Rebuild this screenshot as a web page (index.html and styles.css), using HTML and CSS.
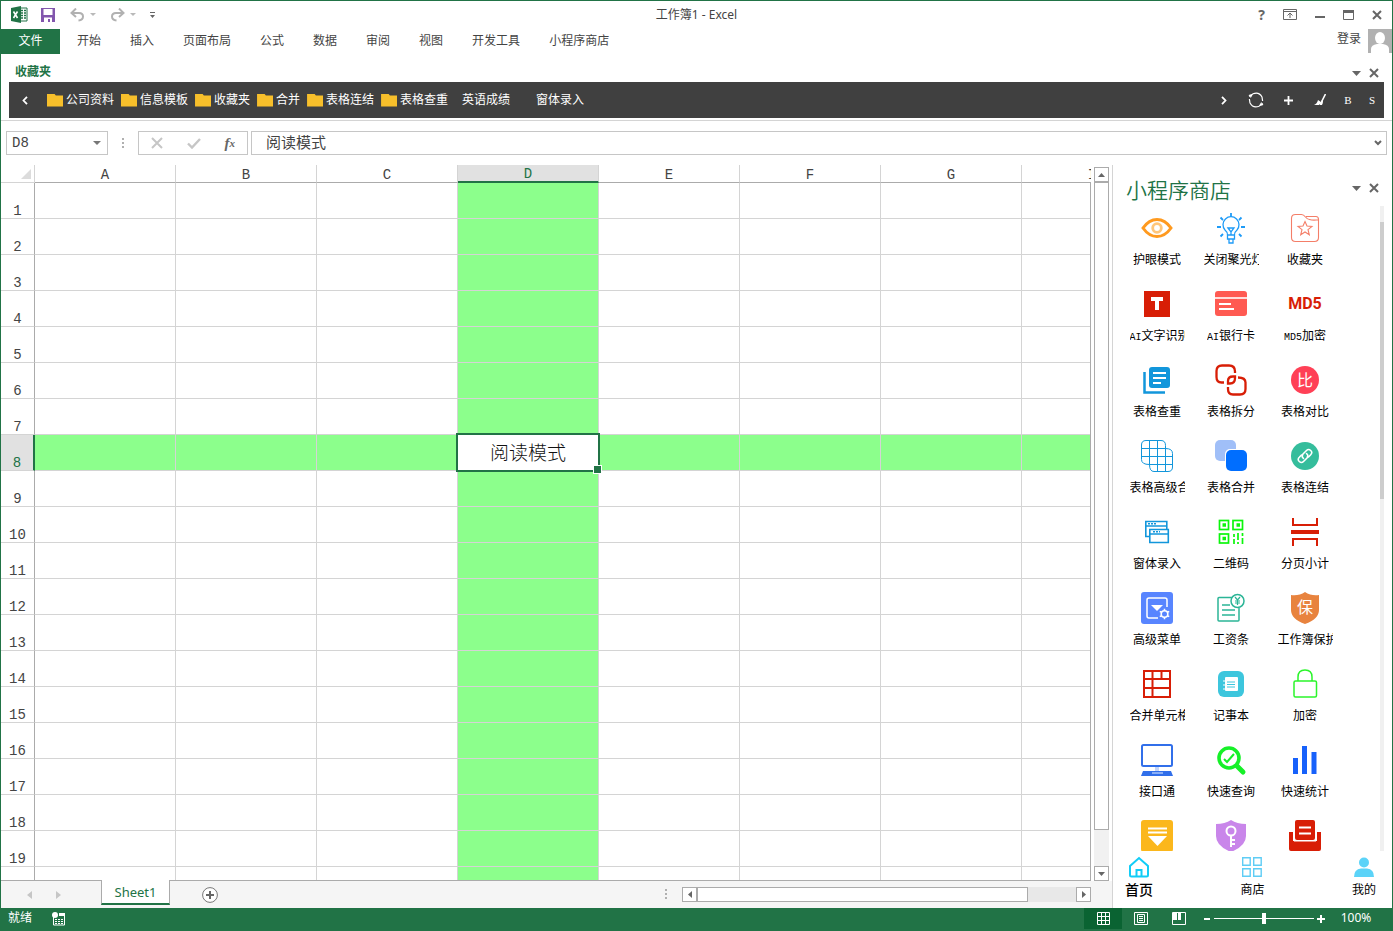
FILE: index.html
```html
<!DOCTYPE html>
<html lang="zh-CN">
<head>
<meta charset="utf-8">
<title>工作簿1 - Excel</title>
<link rel="stylesheet" href="styles.css">
</head>
<body>
<div class="window">
  <header class="titlebar">
    <div class="quick">
      <svg class="logo" width="18" height="18" viewBox="0 0 18 18"><path d="M9 2h7v13H9z" fill="#fff" stroke="#217346"/><path d="M10 4.500h2m1 0h2M10 7h2m1 0h2M10 9.500h2m1 0h2M10 12h2m1 0h2" stroke="#217346" stroke-width="1.500"/><path d="M0 2l10-2v17L0 15z" fill="#217346"/><path d="M2.500 5.500l4 6.500M6.500 5.500l-4 6.500" stroke="#fff" stroke-width="1.600"/></svg>
      <button class="save" aria-label="保存"><svg width="14" height="14" viewBox="0 0 14 14"><path d="M0 0h14v14H0z" fill="#8256ad"/><path d="M2.500 1h9v6h-9zM3 9.500h8V14H9v-3H7v3H3z" fill="#fff"/></svg></button>
      <button class="undo" aria-label="撤消"><svg width="27" height="14" viewBox="0 0 27 14" fill="none"><path d="M2 5h7q4 0 4 3.500T8.500 12.500M6 .5L1.500 5 6 9" stroke="#b1b1b1" stroke-width="2"/><path d="M20 5h6l-3 3z" fill="#b9b9b9"/></svg></button>
      <button class="redo" aria-label="恢复"><svg width="27" height="14" viewBox="0 0 27 14" fill="none"><path d="M13 5H6Q2 5 2 8.500t4.500 4M9 .5L13.500 5 9 9" stroke="#b1b1b1" stroke-width="2"/><path d="M20 5h6l-3 3z" fill="#b9b9b9"/></svg></button>
      <button class="more" aria-label="自定义"><svg width="7" height="7" viewBox="0 0 7 7"><path d="M1 0h5v1H1zM1 3h5L3.500 6z" fill="#666"/></svg></button>
    </div>
    <h1 class="doc-title">工作簿1 - Excel</h1>
    <div class="win-buttons">
      <button class="help" aria-label="帮助">?</button>
      <button aria-label="功能区选项"><svg width="14" height="12" viewBox="0 0 14 12" fill="none" stroke="#666"><path d="M.5.5h13v10H.5zM1 2.500h12M7 9V4M4.500 6.500L7 4l2.500 2.500"/></svg></button>
      <button aria-label="最小化"><svg width="10" height="12" viewBox="0 0 10 12"><path d="M0 7h10v2H0z" fill="#666"/></svg></button>
      <button aria-label="最大化"><svg width="11" height="11" viewBox="0 0 11 11"><path d="M.5.5h10v9H.5z" fill="none" stroke="#666"/><path d="M0 0h11v3H0z" fill="#666"/></svg></button>
      <button aria-label="关闭"><svg width="10" height="10" viewBox="0 0 10 10"><path d="M1 1l8 8M9 1L1 9" stroke="#666" stroke-width="2"/></svg></button>
    </div>
  </header>

  <nav class="ribbon">
    <button class="tab file">文件</button><button class="tab">开始</button><button class="tab">插入</button><button class="tab">页面布局</button><button class="tab">公式</button><button class="tab">数据</button><button class="tab">审阅</button><button class="tab">视图</button><button class="tab">开发工具</button><button class="tab">小程序商店</button>
    <button class="login"><span>登录</span><svg width="24" height="24" viewBox="0 0 24 24"><path d="M0 0h24v24H0z" fill="#b1b1b1"/><ellipse cx="12" cy="9" rx="5" ry="6" fill="#fff"/><path d="M3 24v-4q0-4 6-5h6q6 1 6 5v4z" fill="#fff"/></svg></button>
  </nav>

  <section class="favorites">
    <div class="fav-head">
      <h2>收藏夹</h2>
      <div class="pane-tools">
        <button aria-label="选项"><svg width="9" height="5" viewBox="0 0 9 5"><path d="M0 0h9L4.500 5z" fill="#666"/></svg></button>
        <button aria-label="关闭"><svg width="10" height="10" viewBox="0 0 10 10"><path d="M1 1l8 8M9 1L1 9" stroke="#666" stroke-width="2"/></svg></button>
      </div>
    </div>
    <div class="fav-bar">
      <button class="back" aria-label="后退"><svg width="6" height="9" viewBox="0 0 6 9"><path d="M5 .8L1.500 4.500 5 8.200" fill="none" stroke="#fff" stroke-width="1.800"/></svg></button>
      <div class="folders">
        <a href="#"><i class="folder"></i>公司资料</a>
        <a href="#"><i class="folder"></i>信息模板</a>
        <a href="#"><i class="folder"></i>收藏夹</a>
        <a href="#"><i class="folder"></i>合并</a>
        <a href="#"><i class="folder"></i>表格连结</a>
        <a href="#"><i class="folder"></i>表格查重</a>
        <a href="#" class="plain">英语成绩</a>
        <a href="#" class="plain">窗体录入</a>
      </div>
      <div class="fav-actions">
        <button aria-label="前进"><svg width="6" height="9" viewBox="0 0 6 9"><path d="M1 .8l3.500 3.700L1 8.200" fill="none" stroke="#fff" stroke-width="1.800"/></svg></button>
        <button aria-label="刷新"><svg width="16" height="16" viewBox="0 0 16 16" fill="none" stroke="#fff" stroke-width="1.200"><path d="M5 1.800Q11-.5 14 5l.6 4M11 14.200Q5 16.500 2 11L1.400 7M2.500 5.500Q3 3 5 1.800M13.500 10.500Q13 13 11 14.200"/><path d="M1 4l3-1M12 13l3-1" stroke-width="2"/></svg></button>
        <button aria-label="添加"><svg width="9" height="9" viewBox="0 0 9 9"><path d="M4.500 0v9M0 4.500h9" stroke="#fff" stroke-width="1.800"/></svg></button>
        <button aria-label="清理"><svg width="12" height="12" viewBox="0 0 12 12"><path d="M11.500 0L8 7l-.5 3" fill="none" stroke="#fff" stroke-width="1.600"/><path d="M4 6l3 2 1-2 1 1-1 4H6v-1l-1 1H0q3-1 4-5z" fill="#fff"/></svg></button>
        <button class="letter">B</button>
        <button class="letter">S</button>
      </div>
    </div>
  </section>

  <section class="formula-bar">
    <div class="name-box"><input aria-label="名称框" value="D8"><svg width="8" height="4" viewBox="0 0 8 4"><path d="M0 0h8L4 4z" fill="#777"/></svg></div>
    <svg class="dots" width="3" height="11" viewBox="0 0 3 11"><path d="M0 0h2v2H0zM0 4h2v2H0zM0 8h2v2H0z" fill="#b0b0b0"/></svg>
    <div class="fx">
      <button aria-label="取消"><svg width="12" height="12" viewBox="0 0 12 12"><path d="M1 1l10 10M11 1L1 11" stroke="#c6c6c6" stroke-width="2"/></svg></button>
      <button aria-label="输入"><svg width="14" height="11" viewBox="0 0 14 11"><path d="M1 5.500l4 4L13 1" fill="none" stroke="#c6c6c6" stroke-width="2.400"/></svg></button>
      <button class="fn" aria-label="插入函数">f<sub>x</sub></button>
    </div>
    <div class="formula"><input aria-label="编辑栏" value="阅读模式"><svg width="8" height="6" viewBox="0 0 8 6"><path d="M1 1l3 3 3-3" fill="none" stroke="#666" stroke-width="2"/></svg></div>
  </section>

  <main class="work">
    <section class="book">
      <div class="sheet-area">
        <div class="sheet">
          <table>
            <colgroup><col class="num"><col><col><col><col><col><col><col><col></colgroup>
            <thead><tr><th class="corner"><svg width="10" height="10" viewBox="0 0 10 10"><path d="M10 0v10H0z" fill="#dcdcdc"/></svg></th><th>A</th><th>B</th><th>C</th><th class="on">D</th><th>E</th><th>F</th><th>G</th><th>I</th></tr></thead>
            <tbody>
              <tr><th>1</th><td></td><td></td><td></td><td class="hl"></td><td></td><td></td><td></td><td></td></tr>
              <tr><th>2</th><td></td><td></td><td></td><td class="hl"></td><td></td><td></td><td></td><td></td></tr>
              <tr><th>3</th><td></td><td></td><td></td><td class="hl"></td><td></td><td></td><td></td><td></td></tr>
              <tr><th>4</th><td></td><td></td><td></td><td class="hl"></td><td></td><td></td><td></td><td></td></tr>
              <tr><th>5</th><td></td><td></td><td></td><td class="hl"></td><td></td><td></td><td></td><td></td></tr>
              <tr><th>6</th><td></td><td></td><td></td><td class="hl"></td><td></td><td></td><td></td><td></td></tr>
              <tr><th>7</th><td></td><td></td><td></td><td class="hl"></td><td></td><td></td><td></td><td></td></tr>
              <tr class="current"><th>8</th><td></td><td></td><td></td><td class="active">阅读模式</td><td></td><td></td><td></td><td></td></tr>
              <tr><th>9</th><td></td><td></td><td></td><td class="hl"></td><td></td><td></td><td></td><td></td></tr>
              <tr><th>10</th><td></td><td></td><td></td><td class="hl"></td><td></td><td></td><td></td><td></td></tr>
              <tr><th>11</th><td></td><td></td><td></td><td class="hl"></td><td></td><td></td><td></td><td></td></tr>
              <tr><th>12</th><td></td><td></td><td></td><td class="hl"></td><td></td><td></td><td></td><td></td></tr>
              <tr><th>13</th><td></td><td></td><td></td><td class="hl"></td><td></td><td></td><td></td><td></td></tr>
              <tr><th>14</th><td></td><td></td><td></td><td class="hl"></td><td></td><td></td><td></td><td></td></tr>
              <tr><th>15</th><td></td><td></td><td></td><td class="hl"></td><td></td><td></td><td></td><td></td></tr>
              <tr><th>16</th><td></td><td></td><td></td><td class="hl"></td><td></td><td></td><td></td><td></td></tr>
              <tr><th>17</th><td></td><td></td><td></td><td class="hl"></td><td></td><td></td><td></td><td></td></tr>
              <tr><th>18</th><td></td><td></td><td></td><td class="hl"></td><td></td><td></td><td></td><td></td></tr>
              <tr><th>19</th><td></td><td></td><td></td><td class="hl"></td><td></td><td></td><td></td><td></td></tr>
              <tr><th></th><td></td><td></td><td></td><td class="hl"></td><td></td><td></td><td></td><td></td></tr>
            </tbody>
          </table>
        </div>
        <div class="vscroll">
          <button aria-label="向上"><svg width="7" height="4" viewBox="0 0 7 4"><path d="M0 4h7L3.500 0z" fill="#666"/></svg></button>
          <div class="vthumb"></div><div class="vtrack"></div>
          <button aria-label="向下"><svg width="7" height="4" viewBox="0 0 7 4"><path d="M0 0h7L3.500 4z" fill="#666"/></svg></button>
        </div>
      </div>
      <div class="tabs">
        <div class="tab-nav">
          <button aria-label="上一张"><svg width="5" height="8" viewBox="0 0 5 8"><path d="M5 0v8L0 4z" fill="#c6c6c6"/></svg></button>
          <button aria-label="下一张"><svg width="5" height="8" viewBox="0 0 5 8"><path d="M0 0v8l5-4z" fill="#c6c6c6"/></svg></button>
        </div>
        <button class="sheet-tab">Sheet1</button>
        <div class="tab-rest">
          <button class="add" aria-label="新工作表"><svg width="16" height="16" viewBox="0 0 16 16"><circle cx="8" cy="8" r="7.400" fill="#fff" stroke="#777"/><path d="M8 4v8M4 8h8" stroke="#666" stroke-width="2"/></svg></button>
          <svg class="grip" width="3" height="11" viewBox="0 0 3 11"><path d="M0 0h2v2H0zM0 4h2v2H0zM0 8h2v2H0z" fill="#b0b0b0"/></svg>
          <div class="hscroll">
            <button aria-label="向左"><svg width="4" height="7" viewBox="0 0 4 7"><path d="M4 0v7L0 3.500z" fill="#666"/></svg></button>
            <div class="hthumb"></div><div class="htrack"></div>
            <button aria-label="向右"><svg width="4" height="7" viewBox="0 0 4 7"><path d="M0 0v7l4-3.500z" fill="#666"/></svg></button>
          </div>
        </div>
      </div>
    </section>

    <aside class="store">
      <div class="store-head">
        <h2>小程序商店</h2>
        <div class="pane-tools">
          <button aria-label="选项"><svg width="9" height="5" viewBox="0 0 9 5"><path d="M0 0h9L4.500 5z" fill="#666"/></svg></button>
          <button aria-label="关闭"><svg width="10" height="10" viewBox="0 0 10 10"><path d="M1 1l8 8M9 1L1 9" stroke="#666" stroke-width="2"/></svg></button>
        </div>
      </div>
      <div class="store-body">
        <div class="apps">
          <a class="app" href="#"><svg viewBox="0 0 32 32" fill="none"><path d="M2 16q6-8.500 14-8.500T30 16q-6 8.500-14 8.500T2 16z" stroke="#ff9a1f" stroke-width="3"/><circle cx="16" cy="16" r="4.300" stroke="#ffc67a" stroke-width="2.800"/></svg><span>护眼模式</span></a>
          <a class="app" href="#"><svg viewBox="0 0 32 32" fill="none" stroke="#1e9bf7" stroke-width="1.300"><path d="M12.500 23q0-3-2.500-5a8 8 0 1 1 12 0q-2.500 2-2.500 5zM12.500 23v4h7v-4M14 27v4h4v-4M13 16l3 4 3-4zM16 20v3"/><path d="M16 1v4M5.500 5.500L8 8M26.500 5.500L24 8M2 15h4M26 15h4M5.500 24.500L8 22M26.500 24.500L24 22" stroke-width="1.800"/></svg><span>关闭聚光灯</span></a>
          <a class="app" href="#"><svg viewBox="0 0 32 32" fill="none" stroke="#f47e68" stroke-width="1.100"><path d="M25.500 29.500h-19q-4 0-4-4V6.500q0-4 4-4h6q2 0 4 2.500t4 2.500q3 1 9 .3v17.700q0 4-4 4zM17 4.500h10q2.500 0 2.500 3M16 9.500l2 4.500 5 .4-4 3.300 1.300 5L16 20l-4.300 2.700 1.300-5-4-3.300 5-.4z"/></svg><span>收藏夹</span></a>

          <a class="app" href="#"><svg viewBox="0 0 32 32"><path d="M3 3h26v26H3z" fill="#d81e06"/><path d="M10 11h12M16 11v11" stroke="#fff" stroke-width="4"/></svg><span><small>AI</small>文字识别</span></a>
          <a class="app" href="#"><svg class="wide" viewBox="0 0 34 32"><rect x="1" y="3" width="32" height="25" rx="3" fill="#ff5a52"/><path d="M1 10h32" stroke="#fff" stroke-width="1.600"/><path d="M5 16h12M5 21h15" stroke="#fff" stroke-width="2"/></svg><span><small>AI</small>银行卡</span></a>
          <a class="app" href="#"><b class="md5">MD5</b><span><small>MD5</small>加密</span></a>

          <a class="app" href="#"><svg viewBox="0 0 32 32"><rect x="8" y="3" width="21" height="21" rx="3" fill="#1296db"/><path d="M3.500 8v20.500H24" fill="none" stroke="#1296db" stroke-width="2.500"/><path d="M12 9h13M12 14h13M12 19h8" stroke="#fff" stroke-width="2"/></svg><span>表格查重</span></a>
          <a class="app" href="#"><svg viewBox="0 0 32 32" fill="none" stroke="#d81e06" stroke-width="2.300"><path d="M9 18.500H6.500Q1.500 18.500 1.500 13V7Q1.500 1.500 7 1.500h7q6 0 6 6V9M23 13.500q7.500 0 7.500 5V25q0 5.500-5.500 5.500h-7q-5 0-5-5.500v-2"/><path d="M13 19.500V17q0-4.500 5-4.500h2V14q0 5.500-5 5.500z"/></svg><span>表格拆分</span></a>
          <a class="app" href="#"><svg viewBox="0 0 32 32"><circle cx="16" cy="16" r="14" fill="#ff4056"/><text x="16" y="22" text-anchor="middle" font-size="16" fill="#fff">比</text></svg><span>表格对比</span></a>

          <a class="app" href="#"><svg viewBox="0 0 32 32" fill="none" stroke="#1296db"><path d="M5 .5h15q4.500 0 4.500 5v3q7 0 7 5V27q0 4.500-4.500 4.500H13q-4.500 0-4.500-7-8 0-8-5V5Q.5.500 5 .5zM8.500 1v24M16.500 1v30M24.500 8v23M1 8.500h24M1 16.500h30M8 24.500h23"/></svg><span>表格高级合并</span></a>
          <a class="app" href="#"><svg viewBox="0 0 32 32"><rect width="21" height="21" rx="5" fill="#a0bff8"/><rect x="10" y="9" width="23" height="23" rx="5" fill="#fff"/><rect x="11" y="10" width="21" height="21" rx="5" fill="#006eff"/></svg><span>表格合并</span></a>
          <a class="app" href="#"><svg viewBox="0 0 32 32"><circle cx="16" cy="16" r="14" fill="#35bd9c"/><g fill="none" stroke="#fff" stroke-width="1.600" stroke-linecap="round"><path d="M14.500 18.500q-2.500-2-.5-4.500l3.500-3.500q2-2 4.200 0t0 4.200l-2.200 2.300"/><path d="M17.500 13.500q2.500 2 .5 4.500l-3.500 3.500q-2 2-4.200 0t0-4.200l2.200-2.300"/></g></svg><span>表格连结</span></a>

          <a class="app" href="#"><svg viewBox="0 0 32 32" fill="none" stroke="#1296db" stroke-width="1.600"><path d="M8 20.500H4.800V5.500h21V13M5 10h20M8.800 13.500h18.500v13H8.800zM9 18h18"/><path d="M7 7.800h8M12 15.800h7" stroke-dasharray="2 1"/></svg><span>窗体录入</span></a>
          <a class="app" href="#"><svg viewBox="0 0 32 32" fill="none" stroke="#0bf60b" stroke-width="1.700"><rect x="4.500" y="4.500" width="9" height="9"/><rect x="18" y="4.500" width="9.500" height="9"/><rect x="4.500" y="18" width="9" height="9"/><path d="M7.500 9H11M21.500 9H25M7.500 22.500H11" stroke-width="3.500"/><path d="M19 18v3m0 2v5M23 17v7m0 2v2M27.500 17v3m0 2v6"/></svg><span>二维码</span></a>
          <a class="app" href="#"><svg viewBox="0 0 32 32" fill="none" stroke="#d81e06" stroke-width="2"><path d="M4 2v7h24V2M4 30v-7h24v7"/><path d="M2 16h28" stroke-width="4"/></svg><span>分页小计</span></a>

          <a class="app" href="#"><svg viewBox="0 0 32 32"><rect width="32" height="32" rx="3" fill="#5885ff"/><path d="M17 26H8q-2 0-2-2V8q0-2 2-2h16q2 0 2 2v7" fill="none" stroke="#fff" stroke-width="1.500"/><path d="M10 13h12l-6 6z" fill="#fff"/><circle cx="23.500" cy="22" r="3.300" fill="none" stroke="#fff" stroke-width="1.600"/><path d="M23.500 16.800v2M23.500 25.200v2M18.800 19.400l1.900 1M26.300 23.600l1.900 1M18.800 24.600l1.900-1M26.300 20.400l1.900-1" stroke="#fff" stroke-width="1.600"/></svg><span>高级菜单</span></a>
          <a class="app" href="#"><svg viewBox="0 0 32 32" fill="none" stroke="#2bb596" stroke-width="1.500"><path d="M17 5.500H4q-1 0-1 1V28q0 1 1 1h19q1 0 1-1V16M7 13h8M7 18h13M7 23h13"/><circle cx="22.500" cy="9" r="6.500"/><path d="M20 5l2.500 3L25 5M22.500 8v5M20 9h5M20 11h5" stroke-width="1.200"/></svg><span>工资条</span></a>
          <a class="app" href="#"><svg viewBox="0 0 32 32"><path d="M16 0q6 4 14 3v15q0 9-14 14Q2 27 2 18V3q8 1 14-3z" fill="#e8833e"/><text x="16" y="21" text-anchor="middle" font-size="16" fill="#fff">保</text></svg><span>工作簿保护</span></a>

          <a class="app" href="#"><svg viewBox="0 0 32 32" fill="none" stroke="#d81e06" stroke-width="2"><path d="M3 3h26v26H3zM11.500 3v26M20.500 3v9M3 11h26M3 20h26"/></svg><span>合并单元格</span></a>
          <a class="app" href="#"><svg viewBox="0 0 32 32"><rect x="3" y="3" width="26" height="26" rx="6" fill="#3dc6dd"/><rect x="10" y="9" width="13" height="14" rx="1" fill="#fff"/><path d="M12 14h8M12 16.500h8M12 19h8" stroke="#3dc6dd" stroke-width="1"/><path d="M9 12v2m0 2v2m0 2v2" stroke="#fff"/></svg><span>记事本</span></a>
          <a class="app" href="#"><svg viewBox="0 0 32 32" fill="none" stroke="#2bf52b" stroke-width="1.500"><rect x="5" y="13" width="22.500" height="16" rx="1.500"/><path d="M9 13V9q0-7 7-7t7 7v4"/></svg><span>加密</span></a>

          <a class="app" href="#"><svg viewBox="0 0 32 32"><rect x="1" y="1" width="30" height="21" rx="1.500" fill="#fff" stroke="#316fea" stroke-width="2"/><path d="M14 23h4v4h-4z" fill="#c3d5fa"/><path d="M2 27h28l2 5H0z" fill="#316fea"/><path d="M11 29h11" stroke="#a9c4fa" stroke-width="1.500"/></svg><span>接口通</span></a>
          <a class="app" href="#"><svg viewBox="0 0 32 32" fill="none" stroke="#16f028"><circle cx="14" cy="14" r="10" stroke-width="3.600"/><path d="M22 22l6 6" stroke-width="5" stroke-linecap="round"/><path d="M9 15l3 3 7-8" stroke-width="2"/></svg><span>快速查询</span></a>
          <a class="app" href="#"><svg viewBox="0 0 32 32"><path d="M4 14h5v16H4zM13 2h5v28h-5zM22.500 8h5v22h-5z" fill="#1761fb"/></svg><span>快速统计</span></a>

          <a class="app" href="#" aria-label="筛选"><svg viewBox="0 0 32 32"><rect width="32" height="32" rx="3" fill="#fbb71c"/><path d="M7 8.500h19M7 12.500h19" stroke="#fff" stroke-width="2"/><path d="M7 16h19l-9.500 10z" fill="#fff"/></svg></a>
          <a class="app" href="#" aria-label="密钥"><svg viewBox="0 0 32 32"><path d="M16 0q6 4 15 4v12q0 10-15 16Q1 26 1 16V4q9 0 15-4z" fill="#c986ea"/><g fill="none" stroke="#fff" stroke-width="2"><circle cx="16" cy="11" r="4.500"/><path d="M16 15v12M16 20h4M16 24h4"/></g></svg></a>
          <a class="app" href="#" aria-label="打印"><svg viewBox="0 0 32 32"><path d="M0 12h4v9h24v-9h4v17q0 2-2 2H2q-2 0-2-2z" fill="#d81e06"/><rect x="6" width="20" height="20" rx="2" fill="#d81e06"/><path d="M5 12v9h22v-9" fill="none" stroke="#fff"/><path d="M10 7.500h12M10 13.500h12" stroke="#fff" stroke-width="2"/></svg></a>
        </div>
        <div class="store-scroll"><div class="store-thumb"></div></div>
      </div>
      <nav class="store-nav">
        <a class="current-page" href="#"><svg width="22" height="22" viewBox="0 0 22 22" fill="none" stroke="#12cdf7" stroke-width="2"><path d="M2 10L11 2l9 8v9q0 1.500-1.500 1.500h-15Q2 20.500 2 19zM8.500 20v-6h5v6"/></svg>首页</a>
        <a href="#"><svg width="22" height="22" viewBox="0 0 22 22" fill="none" stroke="#5fcdf5" stroke-width="1.400"><path d="M1.700 1.700h7.500v7.500H1.700zM12.700 1.700h7.500v7.500h-7.500zM1.700 12.700h7.500v7.500H1.700zM12.700 12.700h7.500v7.500h-7.500z"/></svg>商店</a>
        <a href="#"><svg width="22" height="22" viewBox="0 0 22 22"><circle cx="11" cy="6.500" r="5" fill="#5bd3f8"/><path d="M1 21q0-8 7-8.500h6q7 .5 7 8.500z" fill="#5bd3f8"/></svg>我的</a>
      </nav>
    </aside>
  </main>

  <footer class="status">
    <span>就绪</span>
    <button class="macro" aria-label="录制宏"><svg width="14" height="14" viewBox="0 0 14 14"><path d="M1.500 5v8h11V2.500H7" fill="none" stroke="#fff"/><path d="M7 1h6v3H7z" fill="#fff"/><circle cx="3" cy="3" r="3" fill="#fff"/><path d="M3 7.500h8M3 9.500h8M3 11.500h8" stroke="#fff" stroke-dasharray="2 1"/></svg></button>
    <div class="views">
      <button class="view on" aria-label="普通"><svg width="13" height="13" viewBox="0 0 13 13" fill="none" stroke="#fff"><path d="M.5.500h12v12H.5zM4.500 0v13M8.500 0v13M0 4.500h13M0 8.500h13"/></svg></button>
      <button class="view" aria-label="页面布局"><svg width="14" height="13" viewBox="0 0 14 13" fill="none" stroke="#fff"><path d="M.5.500h13v12H.5zM3.500 2.500h7v8h-7zM5 4.500h4M5 6.500h4M5 8.500h4"/></svg></button>
      <button class="view" aria-label="分页预览"><svg width="14" height="13" viewBox="0 0 14 13"><path d="M.5.500h13v12H.5z" fill="none" stroke="#fff"/><path d="M1 1h4v7H1zM6 1h3v7H6z" fill="#fff"/></svg></button>
    </div>
    <button class="zoom-step" aria-label="缩小"><svg width="8" height="8" viewBox="0 0 8 8"><path d="M1 4h6" stroke="#fff" stroke-width="2"/></svg></button>
    <input class="zoom" type="range" min="0" max="100" value="50" aria-label="缩放">
    <button class="zoom-step" aria-label="放大"><svg width="8" height="8" viewBox="0 0 8 8"><path d="M0 4h8M4 0v8" stroke="#fff" stroke-width="2"/></svg></button>
    <button class="percent">100%</button>
  </footer>
</div>
</body>
</html>
```
FILE: styles.css
```css
* { box-sizing: border-box; }
body {
  margin: 0;
  font-family: "Noto Sans", "Noto Sans CJK SC", sans-serif;
  font-size: 12px;
  line-height: 16px;
  color: #444;
}
button, input { font: inherit; color: inherit; border: 0; background: none; padding: 0; margin: 0; outline: 0; }
button { display: flex; align-items: center; justify-content: center; white-space: nowrap; flex: none; }
a { color: inherit; text-decoration: none; }
h1, h2 { margin: 0; font-size: 12px; font-weight: 400; }
svg { display: block; flex: none; }

.window {
  height: 100vh;
  display: flex;
  flex-direction: column;
  border: 1px solid #217346;
  border-bottom: 0;
  background: #fff;
  overflow: hidden;
}

/* Title bar */
.titlebar { height: 28px; flex: none; display: grid; grid-template-columns: 1fr auto 1fr; align-items: center; padding: 0 10px; }
.quick { display: flex; align-items: center; }
.logo { margin-right: 12px; }
.save { margin-right: 15px; }
.undo { margin-right: 13px; }
.redo { margin-right: 12px; }
.win-buttons { display: flex; align-items: center; justify-content: flex-end; gap: 18px; }
.help { font-weight: 700; font-size: 14px; color: #666; }

/* Ribbon */
.ribbon { display: flex; height: 25px; flex: none; gap: 1px; }
.tab { padding: 0 14px 2px; }
.tab.file { width: 59px; margin-right: 2px; background: #217346; color: #fff; }
.login { margin-left: auto; gap: 7px; align-items: flex-start; }
.login span { padding-top: 2px; }

/* Favorites */
.favorites { flex: none; border-bottom: 1px solid #d4d4d4; padding: 0 8px 2px; }
.fav-head { display: flex; align-items: flex-end; justify-content: space-between; height: 28px; padding: 0 5px 1px 6px; }
.fav-head h2 { color: #217346; font-weight: 700; line-height: 18px; }
.pane-tools { display: flex; align-items: center; height: 16px; gap: 8px; }
.fav-bar { height: 36px; background: #404040; color: #fff; display: flex; align-items: center; padding: 0 0 0 13px; }
.back { width: 6px; margin-right: 19px; }
.folders { display: flex; gap: 7px; white-space: nowrap; }
.folders a { display: flex; align-items: center; gap: 3px; }
.folders .plain { margin: 0 12px 0 7px; }
.folder { width: 16px; height: 13px; background: #f7bf2b; clip-path: polygon(0 0, 45% 0, 55% 15%, 100% 15%, 100% 100%, 0 100%); }
.fav-actions { margin-left: auto; display: flex; align-items: center; }
.fav-actions button { width: 32px; }
.fav-actions .letter { width: 24px; font: 11px "Liberation Serif", serif; }

/* Formula bar */
.formula-bar { display: flex; align-items: center; flex: none; padding: 10px 5px; }
.name-box, .fx, .formula { display: flex; align-items: center; height: 24px; border: 1px solid #c6c6c6; }
.name-box { width: 102px; padding: 0 6px 0 5px; font: 14px "Liberation Mono", monospace; }
.name-box input { flex: 1; min-width: 0; }
.dots { margin: 0 13px 0 14px; }
.fx { width: 110px; justify-content: space-between; padding: 0 12px; margin-right: 3px; }
.fn { font: italic 700 15px "Liberation Serif", serif; color: #666; }
.fn sub { font-size: 11px; line-height: 1; }
.formula { flex: 1; padding: 0 4px 0 14px; font-size: 15px; }
.formula input { flex: 1; height: 20px; line-height: 20px; min-width: 0; margin-bottom: 2px; }

/* Workbook */
.work { flex: 1; min-height: 0; display: flex; }
.book { flex: 1; min-width: 0; display: flex; flex-direction: column; }
.sheet-area { flex: 1; min-height: 0; display: flex; }
.sheet { flex: 1; min-width: 0; overflow: hidden; position: relative; border-bottom: 1px solid #ababab; }
.sheet::after { content: ""; position: absolute; top: 17px; right: 0; bottom: 0; border-right: 1px solid #ababab; }
table { table-layout: fixed; border-collapse: separate; border-spacing: 0; width: 1162px; }
col { width: 141px; }
col.num { width: 34px; }
th, td { padding: 0; height: 36px; border: 0 solid #d4d4d4; border-width: 0 1px 1px 0; }
th { font-weight: 400; }
thead th { height: 18px; font: 14px/14px "Liberation Mono", monospace; border-bottom-color: #ababab; vertical-align: bottom; }
thead th.on { background: #e1e1e1; color: #217346; border-bottom: 2px solid #217346; line-height: 13px; }
thead .corner { border-bottom-color: #d4d4d4; }
.corner svg { margin: 0 3px 3px auto; }
tbody th { font: 14px/14px "Liberation Mono", monospace; vertical-align: bottom; border-right-color: #ababab; }
.hl, .current td { background: #8cff8c; }
.current th { background: #e1e1e1; color: #217346; border-right: 2px solid #217346; }
.current .active { background: #fff; position: relative; text-align: center; font-size: 19px; font-weight: 300; line-height: 24px; color: #111; }
.active::before { content: ""; position: absolute; inset: -2px; border: 2px solid #217346; }
.active::after { content: ""; position: absolute; right: -4px; bottom: -4px; width: 7px; height: 7px; background: #217346; border: 1px solid #fff; }

.vscroll { width: 21px; padding: 2px 3px 0; display: flex; flex-direction: column; }
.vscroll button, .hscroll button { width: 15px; height: 15px; border: 1px solid #ababab; background: #fff; }
.vthumb { flex: 648 0 0; border: 1px solid #ababab; background: #fff; }
.vtrack { flex: 36 0 0; background: #f1f1f1; }

.tabs { display: flex; height: 27px; flex: none; background: #f5f5f5; }
.tab-nav { display: flex; align-items: center; gap: 24px; width: 100px; padding-left: 26px; }
.sheet-tab { height: 25px; width: 69px; margin-top: -1px; background: #fff; border: 1px solid #ababab; border-top: 0; border-bottom: 2px solid #217346; color: #217346; font-size: 13px; position: relative; }
.tab-rest { flex: 1; display: flex; align-items: center; padding: 0 21px 0 32px; }
.grip { margin: 0 14px 0 auto; }
.hscroll { display: flex; width: 46%; }
.hthumb { flex: 330 0 0; border: 1px solid #ababab; background: #fff; }
.htrack { flex: 48 0 0; background: #e8e8e8; }

/* Store pane */
.store { width: 280px; flex: none; border-left: 1px solid #d4d4d4; display: flex; flex-direction: column; }
.store-head { display: flex; justify-content: space-between; height: 41px; padding: 11px 13px 0 13px; }
.store-head h2 { font-size: 21px; line-height: 28px; color: #217346; font-weight: 350; }
.store-head .pane-tools { height: 24px; }
.store-body { flex: 1; min-height: 0; display: flex; justify-content: space-between; padding-right: 8px; overflow: hidden; }
.apps { display: grid; grid-template-columns: repeat(3, 74px); grid-auto-rows: 76px; padding: 6px 0 0 7px; color: #000; }
.app { display: flex; flex-direction: column; align-items: center; gap: 8px; }
.app svg { width: 32px; height: 32px; }
.app svg.wide { width: 34px; }
.app span { max-width: 55px; overflow: hidden; white-space: nowrap; line-height: 16px; }
.app small { font: 10px "Liberation Mono", monospace; }
.md5 { height: 32px; font: 700 16px/32px Roboto, sans-serif; color: #d81e06; }
.store-scroll { width: 4px; background: #f0f0f0; padding-top: 16px; }
.store-thumb { height: 44%; background: #cdcdcd; }
.store-nav { display: flex; justify-content: space-between; height: 57px; padding: 5px 16px 0 12px; color: #000; }
.store-nav a { display: flex; flex-direction: column; align-items: center; gap: 4px; }
.store-nav .current-page { font-size: 14px; font-weight: 500; }

/* Status bar */
.status { height: 23px; flex: none; display: flex; align-items: center; background: #217346; color: #fff; padding: 0 20px 2px 7px; }
.macro { margin-left: 20px; }
.views { display: flex; margin-left: auto; margin-right: 5px; }
.view { width: 38px; height: 21px; }
.view.on { background: #0a6332; }
.zoom-step { width: 8px; }
.zoom { appearance: none; width: 100px; height: 12px; margin: 0 3px; background: linear-gradient(#fff, #fff) center / 100% 1px no-repeat; }
.zoom::-webkit-slider-thumb { appearance: none; width: 4px; height: 11px; background: #fff; }
.status span, .percent { padding-bottom: 2px; }
.percent { width: 32px; margin-left: 15px; }
```
